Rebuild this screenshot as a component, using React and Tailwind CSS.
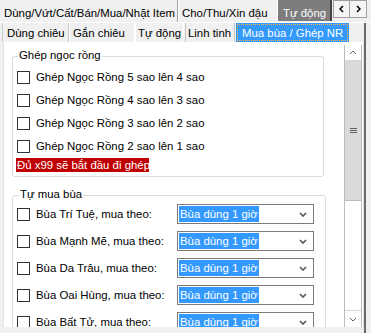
import React from 'react'

const ngocRong = [5, 4, 3, 2]
const bua = ['Bùa Trí Tuệ', 'Bùa Mạnh Mẽ', 'Bùa Da Trâu', 'Bùa Oai Hùng', 'Bùa Bất Tử']

function Checkbox() {
  return <span className="block w-[13px] h-[13px] shrink-0 border border-[#333333] bg-white" />
}

function ChevronDown({ className, color = '#555555', width = 1.6 }) {
  return (
    <svg viewBox="0 0 8 5" className={className}>
      <path d="M1 1l3 3 3-3" fill="none" stroke={color} strokeWidth={width} />
    </svg>
  )
}

function ChevronUp({ className }) {
  return (
    <svg viewBox="0 0 8 5" className={className}>
      <path d="M1 4l3-3 3 3" fill="none" stroke="#606060" strokeWidth="1" />
    </svg>
  )
}

export default function App() {
  return (
    <div className="w-[371px] h-[333px] overflow-hidden bg-[#f0f0f0] font-['Liberation_Sans',Arial,sans-serif] text-[11.4px] leading-[13px] text-black flex flex-col">
      {/* outer tab strip */}
      <div className="flex h-[23px] shrink-0 border-b border-white">
        <div className="w-[178px] pl-[4px] pt-[7px] border-r border-[#a0a0a0] whitespace-nowrap">Dùng/Vứt/Cất/Bán/Mua/Nhặt Item</div>
        <div className="w-[100px] pl-[3px] pt-[7px] border-l border-white border-r border-[#a0a0a0] whitespace-nowrap">Cho/Thu/Xin đậu</div>
        <div className="w-[54px] h-[21px] pl-[5px] pt-[7px] bg-[#7d7d7d] text-white border-r-2 border-[#444444] whitespace-nowrap">Tự động</div>
        <div className="flex h-[18px] ml-[1px]">
          <div className="w-[17px] flex items-center justify-center border border-[#a0a0a0] bg-[#f4f4f4]">
            <svg viewBox="0 0 5 8" className="w-[5px] h-[8px]">
              <path d="M4 1L1 4l3 3" fill="none" stroke="#000" strokeWidth="1.5" />
            </svg>
          </div>
          <div className="w-[17px] flex items-center justify-center border border-l-0 border-[#a0a0a0] bg-[#f4f4f4]">
            <svg viewBox="0 0 5 8" className="w-[5px] h-[8px]">
              <path d="M1 1l3 3-3 3" fill="none" stroke="#000" strokeWidth="1.5" />
            </svg>
          </div>
        </div>
      </div>

      {/* outer tab page */}
      <div className="flex-1 flex flex-col w-[366px] border-r-2 border-[#6a6a6a] min-h-0">
        {/* inner tab strip */}
        <div className="flex h-[19px] shrink-0 pl-[2px] whitespace-nowrap">
          <div className="w-[67px] pl-[4px] pt-[4px] border-l border-[#c8c8c8] border-r border-[#8a8a8a]">Dùng chiêu</div>
          <div className="w-[66px] pl-[3px] pt-[4px] border-l border-white border-r border-[#8a8a8a]">Gắn chiêu</div>
          <div className="w-[49px] pl-[2px] pt-[4px] border-l border-white border-r border-[#8a8a8a]">Tự động</div>
          <div className="w-[50px] pl-[2px] pt-[4px] ml-[1px] border-l border-[#8a8a8a] border-r border-[#c8c8c8]">Linh tinh</div>
          <div className="w-[113px] ml-[1px] p-[1px] bg-[#3399ff] text-white">
            <div className="h-full pl-[4px] pt-[2px] border border-dotted border-[#ffb54a]">Mua bùa / Ghép NR</div>
          </div>
        </div>

        {/* inner tab page */}
        <div className="flex-1 flex ml-[3px] w-[361px] bg-white border-l border-[#e3e3e3] border-r border-r-[#e3e3e3] pt-[3px] min-h-0">
          <div className="flex-1 overflow-hidden">
            <fieldset className="ml-[8px] mt-[4px] w-[312px] border border-[#dcdcdc] rounded-[3px] pl-[4px] pt-[2px] pb-[4px]">
              <legend className="ml-[1px] px-[1px] pb-[2px]">Ghép ngọc rồng</legend>
              {ngocRong.map((n) => (
                <div key={n} className="flex items-center gap-[6px] h-[23px]">
                  <Checkbox />
                  <span>Ghép Ngọc Rồng {n} sao lên {n - 1} sao</span>
                </div>
              ))}
              <div className="w-[133px] h-[14px] -ml-[1px] bg-[#c00000] text-white pl-[1px] leading-[14px] whitespace-nowrap">Đủ x99 sẽ bắt đầu đi ghép</div>
            </fieldset>

            <fieldset className="ml-[8px] mt-[11px] w-[314px] border border-[#dcdcdc] rounded-[3px] pl-[4px] pt-[1px]">
              <legend className="ml-[2px] px-[1px] pb-[2px]">Tự mua bùa</legend>
              <div className="flex flex-col gap-[7px]">
                {bua.map((b) => (
                  <div key={b} className="flex items-center h-[20px]">
                    <div className="w-[160px] flex items-center gap-[6px]">
                      <Checkbox />
                      <span className="whitespace-nowrap">{b}, mua theo:</span>
                    </div>
                    <div className="w-[137px] h-[20px] p-[1px] flex items-center border border-[#7a7a7a] bg-white">
                      <span className="h-[16px] leading-[16px] px-[1px] bg-[#3399ff] text-white whitespace-nowrap">Bùa dùng 1 giờ</span>
                      <ChevronDown className="ml-auto mr-[5px] w-[8px] h-[5px]" />
                    </div>
                  </div>
                ))}
              </div>
            </fieldset>
          </div>

          {/* scrollbar */}
          <div className="w-[18px] mr-[1px] flex flex-col border-x border-[#bcbcbc] bg-white">
            <div className="h-[16px] flex items-center justify-center border-b border-[#d4d4d4]">
              <ChevronUp className="w-[8px] h-[5px]" />
            </div>
            <div className="h-[140px] bg-[#dadada] border-b border-[#bcbcbc] flex flex-col items-center justify-center gap-[1px]">
              <span className="block w-[7px] h-[1px] bg-[#606060]" />
              <span className="block w-[7px] h-[1px] bg-[#606060]" />
              <span className="block w-[7px] h-[1px] bg-[#606060]" />
            </div>
            <div className="flex-1" />
            <div className="h-[17px] flex items-center justify-center border-t border-[#d4d4d4]">
              <ChevronDown className="w-[8px] h-[5px]" color="#606060" width={1} />
            </div>
          </div>
        </div>
        <div className="h-[6px] shrink-0" />
      </div>
    </div>
  )
}
